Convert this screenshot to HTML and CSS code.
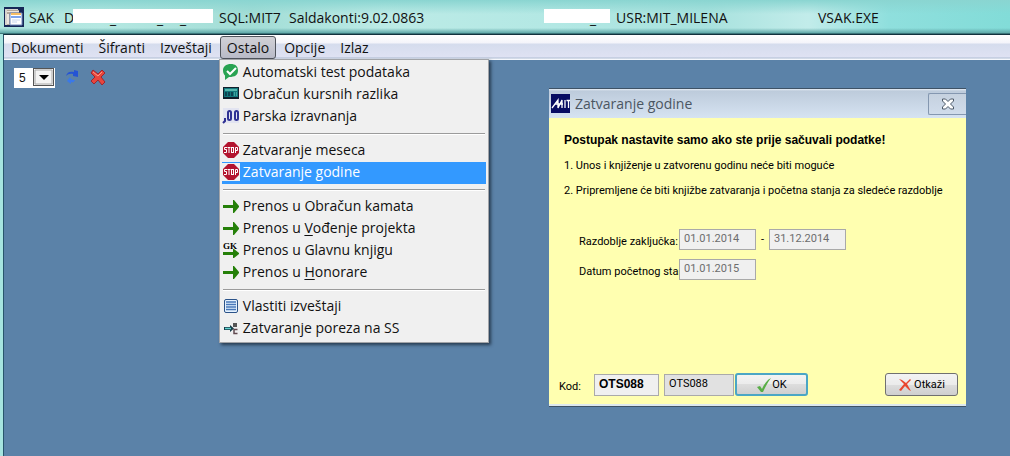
FILE: index.html
```html
<!DOCTYPE html>
<html lang="sr-Latn">
<head>
<meta charset="utf-8">
<title>SAK Saldakonti</title>
<link rel="stylesheet" href="styles.css">
</head>
<body>
<div class="app">
  <header class="titlebar">
    <svg class="app-icon" viewBox="0 0 20 20"><rect width="20" height="20" fill="#172757"/><path d="M1 2h13v3H6v13H1z" fill="#d8d4ce"/><path d="M3 3h12v15H3z" fill="#b5a99c"/><path d="M3 4h12v1H3zM3 7h2v10H3z" fill="#ece6e0"/><path d="M6 6h12v12H6z" fill="#fff" stroke="#7189bd"/><path d="M7 6h10v2H7z" fill="#f5bd65"/><path d="M7 9h10v2H7z" fill="#7ca4ed"/><path d="M8 13h8M8 15h5" stroke="#c8d6ee"/></svg>
    <span class="t-name">SAK</span>
    <span class="t-letter">D</span>
    <span class="redact redact-long"><span>_</span><span>_</span><span>_</span></span>
    <span class="t-sql">SQL:MIT7</span>
    <span class="t-module">Saldakonti:9.02.0863</span>
    <span class="redact redact-short"><span>_</span></span>
    <span class="t-user">USR:MIT_MILENA</span>
    <span class="t-exe">VSAK.EXE</span>
  </header>
  <div class="frame">
    <nav class="menubar">
      <button>Dokumenti</button>
      <button>Šifranti</button>
      <button>Izveštaji</button>
      <div class="menu-root">
        <button class="open" aria-expanded="true">Ostalo</button>
        <div class="dropdown">
          <button><svg viewBox="0 0 18 18"><path d="M9 1C4 1 1 3.500 1 7.500c0 2.500 1 4 2 5V17l4-3c6 0 9-2 9-6.500S13 1 9 1z" fill="#29a352"/><path d="M5 8l3 3 6-6" fill="none" stroke="#fff" stroke-width="2"/></svg><span>Automatski test podataka</span></button>
          <button><svg viewBox="0 0 18 18"><path d="M1 2h16v12H1z" fill="#111f2c"/><path d="M2 3h14v9H2z" fill="#12777c"/><path d="M3 4h12v2H3z" fill="#55b7ae"/><path d="M3 8h8M3 10h8" stroke="#08142a" stroke-dasharray="2 1"/><path d="M12 8h3M12 10h3" stroke="#6bd4c5" stroke-dasharray="1 1"/></svg><span>Obračun kursnih razlika</span></button>
          <button><svg viewBox="0 0 18 18"><path d="M1 1h16v15H1z" fill="#e2e4f1"/><path d="M3 11v3l-2 2" fill="none" stroke="#303294" stroke-width="2"/><rect x="6" y="4" width="3" height="9" rx="1.500" fill="none" stroke="#303294" stroke-width="2"/><rect x="13" y="4" width="3" height="9" rx="1.500" fill="none" stroke="#303294" stroke-width="2"/></svg><span>Parska izravnanja</span></button>
          <hr>
          <button><svg viewBox="0 0 18 18"><path d="M6 1h6l5 5v6l-5 5H6l-5-5V6z" fill="#b3142f"/><g fill="none" stroke="#fff"><path d="M5 6.500H2.500v2h2v3H2M5.500 6.500h3M7 6.500V12M13.500 12V6.500h2v3h-2"/><rect x="9.500" y="6.500" width="2" height="5"/></g></svg><span>Zatvaranje meseca</span></button>
          <button class="selected"><svg viewBox="0 0 18 18"><path d="M6 1h6l5 5v6l-5 5H6l-5-5V6z" fill="#b3142f"/><g fill="none" stroke="#fff"><path d="M5 6.500H2.500v2h2v3H2M5.500 6.500h3M7 6.500V12M13.500 12V6.500h2v3h-2"/><rect x="9.500" y="6.500" width="2" height="5"/></g></svg><span>Zatvaranje godine</span></button>
          <hr>
          <button><svg viewBox="0 0 18 18"><path d="M1 8h10V3h1l5 6v1l-5 6h-1v-5H1z" fill="#258009"/></svg><span>Prenos u Obračun kamata</span></button>
          <button><svg viewBox="0 0 18 18"><path d="M1 8h10V3h1l5 6v1l-5 6h-1v-5H1z" fill="#258009"/></svg><span>Prenos u <u>V</u>ođenje projekta</span></button>
          <button><svg viewBox="0 0 18 18"><path d="M1 11h10V8h1l5 4v1l-5 4h-1v-3H1z" fill="#258009"/><text x="1" y="8" class="gk">GK</text></svg><span>Prenos u Glavnu knjigu</span></button>
          <button><svg viewBox="0 0 18 18"><path d="M1 8h10V3h1l5 6v1l-5 6h-1v-5H1z" fill="#258009"/></svg><span>Prenos u <u>H</u>onorare</span></button>
          <hr>
          <button><svg viewBox="0 0 18 18"><rect x="2.500" y="2.500" width="13" height="13" rx="1.500" fill="#e5f2ff" stroke="#2b5389"/><path d="M4 5h10M4 7.500h10M4 10h10M4 12.500h10" stroke="#4878b9" stroke-width="1.300"/></svg><span>Vlastiti izveštaji</span></button>
          <button><svg viewBox="0 0 18 18"><path d="M2 8h6V6l4 3.500L8 13v-2H2z" fill="#163d49"/><path d="M3 9.500h6" stroke="#64d4d0" stroke-width="1.500"/><path d="M11 4h4v4h-4z" fill="#555"/><path d="M15.500 10.500H12v4h3.500" fill="none" stroke="#60494f" stroke-width="1.500"/></svg><span>Zatvaranje poreza na SS</span></button>
        </div>
      </div>
      <button>Opcije</button>
      <button>Izlaz</button>
    </nav>
    <main class="workspace">
      <div class="toolbar">
        <div class="picker">
          <select aria-label="Broj"><option>5</option></select>
          <svg viewBox="0 0 21 18"><rect x=".5" y=".5" width="20" height="17" fill="#f3f3f3" stroke="#555"/><path d="M2 16V2h17v14z" fill="none" stroke="#aaa"/><path d="M6 7h10l-5 5z"/></svg>
        </div>
        <button aria-label="Osveži"><svg viewBox="0 0 18 18"><path d="M3 8c1-4 4-5 8-4V2l4 1v6l-5-1V6C7 5.500 5 6 3 8z" fill="#2554d4"/><path d="M12 12c-1 2-2 3-4 2v2l-4-3 3-4 1 2c2 1 3 1 4 1z" fill="#3a78e9"/></svg></button>
        <button aria-label="Zatvori"><svg viewBox="0 0 18 18"><path d="M4 2l5 4 4-4 3 3-4 4 4 5-3 3-4-5-4 4-3-3 4-4-4-4z" fill="#e8463d" stroke="#9b2630"/><path d="M4 4l5 4 4-4" fill="none" stroke="#ff9a88"/></svg></button>
      </div>
    </main>
  </div>
</div>

<section class="dialog" role="dialog" aria-labelledby="dialog-title">
  <header class="dialog-head">
    <svg class="mit" viewBox="0 0 19 19"><path d="M0 0h19v19H0z" fill="#080c62"/><path d="M1 14l6-8v8l4-8v8M4 10h8M14 6v8M15.500 6.500H19M17.500 6v8" fill="none" stroke="#fff" stroke-width="1.300"/></svg>
    <h1 id="dialog-title">Zatvaranje godine</h1>
    <button class="close" aria-label="Zatvori prozor"><svg viewBox="0 0 14 12"><path d="M1.500 1h3L7 3.500 9.500 1h3v2L9.500 6l3 3v2h-3L7 8.500 4.500 11h-3V9l3-3-3-3z" fill="#fff" stroke="#4c5968"/></svg></button>
  </header>
  <form class="dialog-body">
    <div class="notes">
      <p><strong>Postupak nastavite samo ako ste prije sačuvali podatke!</strong></p>
      <p>1. Unos i knjiženje u zatvorenu godinu neće biti moguće</p>
      <p>2. Pripremljene će biti knjižbe zatvaranja i početna stanja za sledeće razdoblje</p>
    </div>
    <div class="fields">
      <label for="from">Razdoblje zaključka:</label>
      <div class="range"><input id="from" value="01.01.2014" disabled><span>-</span><input aria-label="Kraj razdoblja" value="31.12.2014" disabled></div>
      <label for="start">Datum početnog star</label>
      <div class="range"><input id="start" value="01.01.2015" disabled></div>
    </div>
    <div class="actions">
      <label for="code">Kod:</label>
      <input id="code" class="code" value="OTS088">
      <input class="code-copy" aria-label="Potvrda koda" value="OTS088" readonly>
      <button type="button" class="ok"><svg viewBox="0 0 16 16"><path d="M1 10l3-1 2 3C8 7 11 3 15 1 11 6 9 11 7 15H5z" fill="#58ae46"/></svg>OK</button>
      <button type="button" class="cancel"><svg viewBox="0 0 14 14"><path d="M1 1l3 1 4 3 4-4 1 1-4 4 4 7-2-1-4-4-4 5-2-1 5-6z" fill="#e9462d"/></svg>Otkaži</button>
    </div>
  </form>
</section>
</body>
</html>
```
FILE: styles.css
```css
* { box-sizing: border-box; }

body {
  margin: 0;
  color: #111;
  font-family: "Open Sans", "Noto Sans", sans-serif;
  font-size: 14px;
}

button, input, select { font: inherit; color: inherit; margin: 0; }
button { border: 0; padding: 0; background: none; }

.app {
  min-height: 100vh;
  display: flex;
  flex-direction: column;
  background: #a6e4df;
}

.titlebar {
  height: 34px;
  flex: none;
  display: flex;
  align-items: center;
  padding-left: 4px;
  white-space: nowrap;
  background:
    linear-gradient(to bottom, #8ad5d1 0, #ffffff00 14px, #ffffff00 28px, #5fa8a8 33px, #17414a 34px),
    linear-gradient(to right, #aee5df 0, #b5e8e2 10%, #a2ddd6 25%, #bcebe6 38%, #b3e8e4 55%, #a8e2de 70%, #c2ecea 80%, #8fdfdd 88%, #82dcd8);
}

.app-icon { width: 20px; height: 20px; margin-right: 5px; }
.t-name { width: 35px; }
.t-letter { width: 9px; }
.t-sql { width: 70px; }
.t-module { width: 255px; }
.t-user { width: 202px; }

.redact {
  display: flex;
  height: 16px;
  line-height: 19px;
  background: linear-gradient(#fff, #fff) top / 100% 14px no-repeat;
}
.redact-long { width: 140px; margin-right: 6px; padding-left: 37px; }
.redact-long span:nth-child(1) { width: 47px; }
.redact-long span:nth-child(2) { width: 23px; }
.redact-short { width: 66px; margin-right: 6px; padding-left: 46px; }

.frame {
  flex: 1;
  display: flex;
  flex-direction: column;
  margin-left: 3px;
  border-left: 1px solid #27556b;
  border-top: 1px solid #12313d;
}

.menubar {
  height: 25px;
  flex: none;
  display: flex;
  gap: 1px;
  padding: 1px 0;
  background: linear-gradient(#fff 0, #f4f4fa 8px, #d5dced 9px, #dfe2f3 22px, #aebcd2 23px, #f5f7fc 24px);
}
.menubar > button, .menu-root > button { height: 23px; padding: 0 7px; }
.menu-root { position: relative; }
.menu-root > .open {
  border: 1px solid #50545c;
  border-radius: 3px;
  padding: 0 6px;
  background: linear-gradient(#d1d1d6, #b9bbc8);
}

.dropdown {
  position: absolute;
  z-index: 2;
  top: 23px;
  left: -1px;
  width: 270px;
  padding: 2px;
  border: 1px solid #a2a4a8;
  background: #f0f0f0;
  box-shadow: 2px 2px 3px #1b2c3dcc;
}
.dropdown button {
  display: flex;
  align-items: center;
  width: 100%;
  height: 22px;
  line-height: 20px;
  padding-bottom: 2px;
  text-align: left;
  white-space: nowrap;
}
.dropdown svg { width: 18px; height: 18px; margin-right: 3px; flex: none; }
.dropdown .selected { background: #3399ff; color: #fff; }
.dropdown .selected svg { background: #f0f0f0; }
.dropdown hr {
  height: 2px;
  margin: 5px 1px;
  border: 0;
  border-top: 1px solid #9b9b9b;
  border-bottom: 1px solid #fff;
}
.dropdown u { text-underline-offset: 2px; }
.gk { font: bold 9px "Liberation Serif", serif; }

.workspace { flex: 1; background: #5b82a8; }

.toolbar { display: flex; align-items: center; padding: 7px 10px; }
.toolbar button { width: 18px; height: 18px; margin-left: 8px; }
.toolbar svg { display: block; }
.picker { position: relative; width: 41px; height: 20px; }
.picker select {
  width: 100%;
  height: 100%;
  appearance: none;
  border: 0;
  border-radius: 0;
  padding: 0 5px;
  background: #fff;
  font: 12px "Liberation Sans", Arial, sans-serif;
}
.picker svg { position: absolute; top: 1px; right: 1px; width: 21px; height: 18px; pointer-events: none; }

.dialog {
  position: absolute;
  top: 88px;
  left: 549px;
  width: 417px;
  border-top: 1px solid #3e5265;
  border-bottom: 1px solid #3e5265;
  background: #ffffb0;
  font: 11px Roboto, "Liberation Sans", sans-serif;
  color: #000;
}
.dialog-head {
  height: 29px;
  display: flex;
  align-items: center;
  padding-left: 2px;
  background: linear-gradient(#e7eef6 0, #bdcbdb 2px, #d6e3f2);
}
.mit { width: 19px; height: 19px; margin-right: 5px; }
.dialog-head h1 {
  flex: 1;
  margin: 0;
  font: 14px "Open Sans", "Noto Sans", sans-serif;
  color: #4b5662;
}
.close {
  display: flex;
  align-items: center;
  justify-content: center;
  width: 38px;
  height: 22px;
  border: 1px solid #8497b0;
  border-right: 0;
  border-radius: 2px 0 0 2px;
  background: linear-gradient(#c5d1df, #d0dceb);
}
.close svg { width: 14px; height: 12px; }

.dialog-body { border-bottom: 2px solid #dce8ef; }
.notes { padding: 14px 15px 0; white-space: nowrap; }
.notes p { margin: 0 0 9px; line-height: 16px; }
.notes strong { font: bold 12px/16px "Liberation Sans", Arial, sans-serif; }

.fields {
  display: grid;
  grid-template-columns: 100px 1fr;
  row-gap: 9px;
  padding: 21px 30px 0;
  align-items: center;
}
.fields label { white-space: nowrap; padding-top: 3px; }
.range { display: flex; align-items: center; }
.range span { width: 13px; text-align: center; }
.range input {
  width: 77px;
  height: 21px;
  padding: 0 4px 2px;
  border: 1px solid #a9a9a9;
  background: #f0f0f0;
  color: #6d6d6d;
}

.actions { display: flex; align-items: center; padding: 93px 8px 8px 10px; }
.actions label { width: 35px; padding-top: 4px; }
.actions input { height: 22px; padding: 0 4px 2px; border: 1px solid #aaa; background: #f0f0f0; }
.actions .code { width: 65px; margin-right: 5px; font: bold 12px "Liberation Sans", Arial, sans-serif; }
.actions .code-copy { width: 70px; background: #e1e1e1; margin-right: 1px; }
.actions button {
  display: flex;
  align-items: center;
  justify-content: center;
  width: 73px;
  height: 23px;
  border: 1px solid #707070;
  border-radius: 3px;
  background: linear-gradient(#f3f3f3 0, #ebebeb 50%, #dddddd 50%, #cfcfcf);
}
.actions .ok { border: 2px solid #4ba6c5; }
.actions .ok svg { width: 16px; height: 16px; }
.actions .cancel { margin-left: auto; }
.actions .cancel svg { width: 14px; height: 14px; margin-right: 2px; }
```
